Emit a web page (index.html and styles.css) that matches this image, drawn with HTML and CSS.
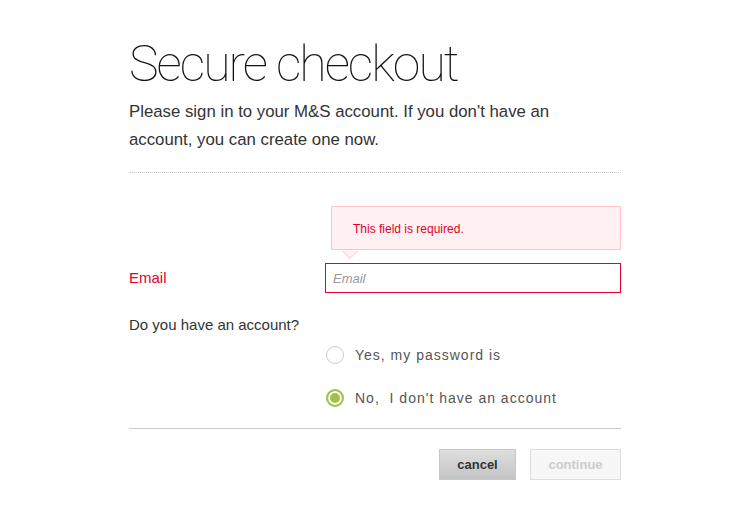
FILE: index.html
```html
<!DOCTYPE html>
<html lang="en">
<head>
  <meta charset="UTF-8" />
  <title>Secure checkout</title>
  <link rel="stylesheet" href="styles.css">
</head>
<body>
  <div class="page">
    <h1>Secure checkout</h1>
    <p class="intro">Please sign in to your M&amp;S account. If you don't have an account, you can create one now.</p>

    <form class="signin">
      <div class="row">
        <label class="label error" for="email">Email</label>
        <div class="field">
          <div class="tooltip">This field is required.</div>
          <input id="email" class="input invalid" placeholder="Email" />
        </div>
      </div>

      <div class="question">Do you have an account?</div>

      <div class="options">
        <label class="option">
          <span class="radio"></span>
          <span>Yes, my password is</span>
        </label>
        <label class="option">
          <span class="radio checked"></span>
          <span>No,&nbsp; I don't have an account</span>
        </label>
      </div>

      <div class="actions">
        <button type="button" class="btn cancel">cancel</button>
        <button type="button" class="btn continue" disabled>continue</button>
      </div>
    </form>
  </div>
</body>
</html>
```

FILE: styles.css
```css
body {
  margin: 0;
  background: #fff;
  color: #333;
  font-family: 'Liberation Sans', Arial, sans-serif;
}
.page {
  width: 492px;
  margin-left: 129px;
  padding-top: 36px;
}
h1 {
  margin: 0;
  font-family: Roboto, sans-serif;
  font-weight: 100;
  font-size: 50px;
  line-height: 56px;
  color: #111;
  letter-spacing: -2px;
}
.intro {
  margin: 6px 0 0;
  font-size: 16.8px;
  line-height: 28px;
  color: #333;
  padding-bottom: 18px;
  padding-right: 60px;
  border-bottom: 1px dotted #ccc;
}
.signin {
  margin-top: 33px;
}
.row {
  display: grid;
  grid-template-columns: 196px 1fr;
  align-items: end;
}
.label {
  font-size: 15px;
  line-height: 30px;
}
.label.error {
  color: #e4002b;
}
.field {
  display: flex;
  flex-direction: column;
}
.tooltip {
  position: relative;
  margin-left: 6px;
  margin-bottom: 13px;
  height: 44px;
  box-sizing: border-box;
  padding: 15px 21px;
  background: #fff0f1;
  border: 1px solid #ffc3cb;
  font-size: 12px;
  color: #e4002b;
}
.tooltip::before,
.tooltip::after {
  content: '';
  position: absolute;
  left: 10px;
  border: 8px solid transparent;
  border-bottom: 0;
}
.tooltip::before {
  top: 44px;
  border-top-color: #ffc3cb;
}
.tooltip::after {
  top: 43px;
  border-top-color: #fff0f1;
}
.input {
  height: 30px;
  box-sizing: border-box;
  padding: 0 7px;
  font-family: inherit;
  font-size: 13px;
  border: 1px solid #ccc;
  outline: none;
}
.input.invalid {
  border-color: #e4002b;
}
.input::placeholder {
  color: #999;
  font-style: italic;
}
.question {
  margin-top: 19px;
  font-size: 15px;
  line-height: 26px;
}
.options {
  margin-left: 196px;
  margin-top: 5px;
  display: flex;
  flex-direction: column;
  gap: 19px;
}
.option {
  display: flex;
  align-items: center;
  gap: 11px;
  height: 24px;
  font-size: 14px;
  letter-spacing: 1px;
  color: #555;
}
.radio {
  width: 18px;
  height: 18px;
  box-sizing: border-box;
  border-radius: 50%;
  border: 1px solid #ccc;
  background: #fff;
  margin-left: 1px;
}
.radio.checked {
  border: 2px solid #a4c04a;
  background: #a4c04a;
  box-shadow: inset 0 0 0 2px #fff;
}
.actions {
  margin-top: 18px;
  border-top: 1px solid #ccc;
  padding-top: 20px;
  display: flex;
  justify-content: flex-end;
  gap: 14px;
}
.btn {
  height: 31px;
  box-sizing: border-box;
  font-family: inherit;
  font-size: 13px;
  font-weight: bold;
  border: 1px solid #ccc;
}
.cancel {
  width: 77px;
  color: #333;
  border-color: #c8c8c8;
  background: linear-gradient(#dedede, #c4c4c4);
}
.continue {
  width: 91px;
  color: #ccc;
  background: #f7f7f7;
  border-color: #ddd;
}
```
